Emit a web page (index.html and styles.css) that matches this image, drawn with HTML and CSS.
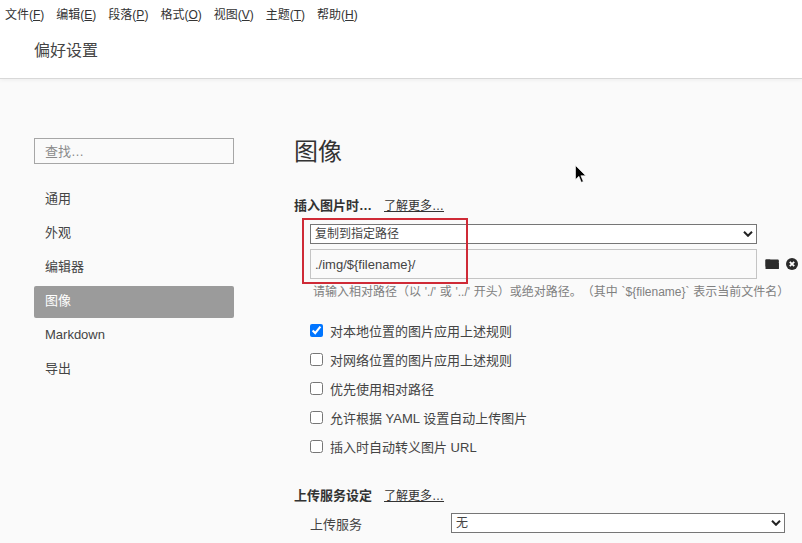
FILE: index.html
```html
<!DOCTYPE html>
<html lang="zh-CN">
<head>
<meta charset="utf-8">
<title>偏好设置</title>
<link rel="stylesheet" href="styles.css">
</head>
<body>
<div class="window">
  <header class="top">
    <nav class="menubar">
      <span>文件(<u>F</u>)</span>
      <span>编辑(<u>E</u>)</span>
      <span>段落(<u>P</u>)</span>
      <span>格式(<u>O</u>)</span>
      <span>视图(<u>V</u>)</span>
      <span>主题(<u>T</u>)</span>
      <span>帮助(<u>H</u>)</span>
    </nav>
    <div class="title">偏好设置</div>
  </header>
  <main class="body">
    <aside class="sidebar">
      <input class="search" type="text" placeholder="查找…">
      <ul class="nav">
        <li>通用</li>
        <li>外观</li>
        <li>编辑器</li>
        <li class="active">图像</li>
        <li>Markdown</li>
        <li>导出</li>
      </ul>
    </aside>
    <section class="content">
      <h1>图像</h1>
      <div class="section-head"><b>插入图片时…</b><a>了解更多…</a></div>
      <div class="indent">
        <div class="select">
          <span>复制到指定路径</span>
          <svg class="chev" width="10" height="6" viewBox="0 0 10 6"><path d="M1 .8l4 4 4-4" fill="none" stroke="#222" stroke-width="2"/></svg>
        </div>
        <div class="path-row">
          <input class="path" type="text" value="./img/${filename}/">
          <svg class="folder" width="14" height="12" viewBox="0 0 14 12"><path d="M0.5 1.5h4.5l1.2 1.5h7.3v1H3L0.5 9zM3.4 5h10.4v6H0.5z" fill="#2b2b2b"/><rect x="0.5" y="1.5" width="13.3" height="9.5" rx="1" fill="#2b2b2b"/></svg>
          <svg class="clear" width="12" height="12" viewBox="0 0 12 12"><circle cx="6" cy="6" r="6" fill="#2b2b2b"/><path d="M3.8 3.8l4.4 4.4M8.2 3.8L3.8 8.2" stroke="#fff" stroke-width="1.8"/></svg>
        </div>
        <p class="hint">请输入相对路径（以 './' 或 '../' 开头）或绝对路径。（其中 `${filename}` 表示当前文件名）</p>
        <div class="checks">
          <label><input type="checkbox" checked>对本地位置的图片应用上述规则</label>
          <label><input type="checkbox">对网络位置的图片应用上述规则</label>
          <label><input type="checkbox">优先使用相对路径</label>
          <label><input type="checkbox">允许根据 YAML 设置自动上传图片</label>
          <label><input type="checkbox">插入时自动转义图片 URL</label>
        </div>
      </div>
      <div class="section-head second"><b>上传服务设定</b><a>了解更多…</a></div>
      <div class="indent upload">
        <span class="upload-label">上传服务</span>
        <div class="select wide">
          <span>无</span>
          <svg class="chev" width="10" height="6" viewBox="0 0 10 6"><path d="M1 .8l4 4 4-4" fill="none" stroke="#222" stroke-width="2"/></svg>
        </div>
      </div>
    </section>
  </main>
  <div class="redbox"></div>
  <svg class="cursor" width="12" height="20" viewBox="0 0 12 20"><path d="M0.5 0.5v14l3.4-3.2 2.4 6 2-.8-2.4-5.8h4.8z" fill="#000" stroke="#fff" stroke-width="0.6"/></svg>
</div>
</body>
</html>
```
FILE: styles.css
```css
* { box-sizing: border-box; }
html, body { margin: 0; padding: 0; }
body {
  font-family: "Liberation Sans", "Noto Sans CJK SC", sans-serif;
  font-size: 13px;
  color: #333;
  background: #fafafa;
  text-spacing-trim: space-all;
}
.window {
  position: relative;
  width: 802px;
  height: 543px;
  overflow: hidden;
  background: #fafafa;
}
.top {
  height: 79px;
  background: #fff;
  border-bottom: 1px solid #d8d8d8;
  box-shadow: 0 1px 4px rgba(0, 0, 0, 0.06);
}
.menubar {
  display: flex;
  gap: 12px;
  height: 26px;
  padding-left: 5px;
  align-items: center;
  font-size: 12px;
  color: #333;
}
.title {
  padding-left: 34px;
  height: 50px;
  line-height: 50px;
  font-size: 16px;
  color: #444;
}
.body {
  display: flex;
  padding: 59px 0 0 34px;
}
.sidebar { width: 200px; flex: none; }
.search {
  display: block;
  width: 200px;
  height: 26px;
  padding: 0 10px;
  border: 1px solid #a6a6a6;
  background: transparent;
  outline: 0;
  font: inherit;
  color: #333;
}
.search::placeholder { color: #8a8a8a; opacity: 1; }
.nav {
  list-style: none;
  margin: 20px 0 0;
  padding: 0;
}
.nav li {
  height: 32px;
  margin-bottom: 2px;
  padding-left: 11px;
  line-height: 30px;
  border-radius: 2px;
  color: #444;
}
.nav li.active { background: #9b9b9b; color: #fff; }
.content { margin-left: 60px; flex: 1; }
h1 {
  margin: 0;
  height: 28px;
  line-height: 28px;
  font-size: 24px;
  font-weight: 400;
  color: #333;
}
.section-head {
  display: flex;
  gap: 12px;
  height: 20px;
  line-height: 20px;
  margin-top: 30px;
  margin-bottom: 8px;
  color: #333;
}
.section-head b { font-weight: 700; }
.section-head a { font-size: 12px; text-decoration: underline; color: #333; }
.section-head.second { margin-top: 30px; margin-bottom: 7px; }
.indent { padding-left: 16px; }
.select {
  position: relative;
  width: 447px;
  height: 20px;
  padding-left: 4px;
  line-height: 18px;
  font-size: 12px;
  border: 1px solid #767676;
  background: #fff;
  color: #444;
}
.chev { position: absolute; right: 3px; top: 6px; }
.path-row {
  display: flex;
  align-items: center;
  margin-top: 5px;
}
.path {
  width: 447px;
  height: 30px;
  padding: 0 4px;
  border: 1px solid #c4c4c4;
  background: transparent;
  outline: 0;
  font: inherit;
  font-size: 13px;
  color: #444;
}
.folder { margin-left: 8px; }
.clear { margin-left: 7px; }
.hint {
  margin: 5px 0 0 3px;
  height: 16px;
  line-height: 16px;
  font-size: 12px;
  word-spacing: 0.4px;
  white-space: nowrap;
  color: #808080;
}
.checks { margin-top: 20px; display: flex; flex-direction: column; gap: 9px; }
.checks label {
  display: flex;
  align-items: center;
  height: 20px;
  color: #444;
}
.checks input { width: 13px; height: 13px; margin: 0 7px 0 0; }
.upload { display: flex; align-items: center; }
.upload-label { width: 141px; color: #444; }
.select.wide { width: 334px; }
.redbox {
  position: absolute;
  left: 302px;
  top: 218px;
  width: 166px;
  height: 66px;
  border: 2px solid #cf2a36;
}
.cursor { position: absolute; left: 575px; top: 165px; }
```
